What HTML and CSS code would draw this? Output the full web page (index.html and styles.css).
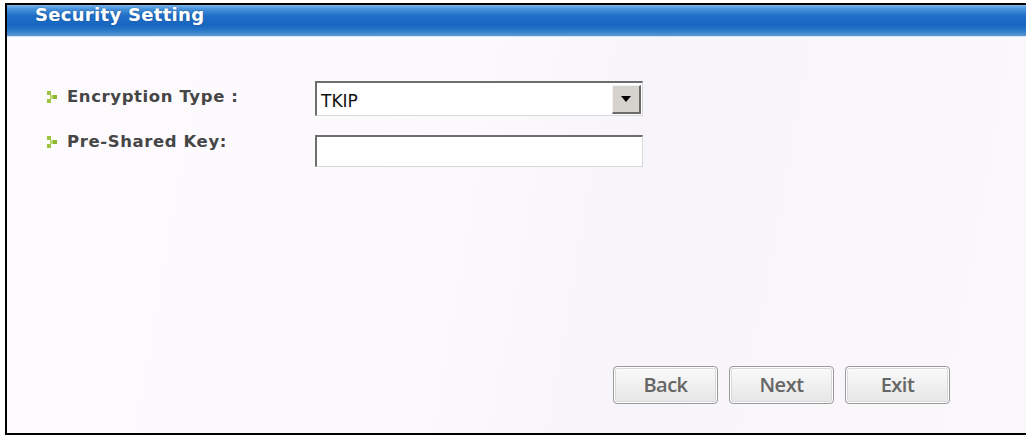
FILE: index.html
```html
<!DOCTYPE html>
<html>
<head>
<meta charset="utf-8">
<link rel="stylesheet" href="styles.css">
</head>
<body>
<div class="frame">
  <div class="header"><span class="title">Security Setting</span></div>
  <div class="content">
    <div class="form">
      <div class="label label-center">
        <svg class="bullet" width="10" height="12" viewBox="0 0 10 12"><rect x="0" y="0" width="4" height="4" fill="#9cc43c"/><rect x="3" y="4" width="3.5" height="4" fill="#b9d874"/><rect x="6" y="4" width="4" height="4" fill="#8cb830"/><rect x="0" y="8" width="4" height="4" fill="#9cc43c"/></svg>
        <span>Encryption Type :</span>
      </div>
      <div class="select">
        <span class="select-value">TKIP</span>
        <span class="select-btn"><svg width="10" height="6" viewBox="0 0 10 6"><path d="M0 0 H10 L5 6 Z" fill="#000"/></svg></span>
      </div>
      <div class="label label-top">
        <svg class="bullet" width="10" height="12" viewBox="0 0 10 12"><rect x="0" y="0" width="4" height="4" fill="#9cc43c"/><rect x="3" y="4" width="3.5" height="4" fill="#b9d874"/><rect x="6" y="4" width="4" height="4" fill="#8cb830"/><rect x="0" y="8" width="4" height="4" fill="#9cc43c"/></svg>
        <span>Pre-Shared Key:</span>
      </div>
      <div class="input"></div>
    </div>
    <div class="buttons">
      <button class="btn">Back</button>
      <button class="btn">Next</button>
      <button class="btn">Exit</button>
    </div>
  </div>
</div>
</body>
</html>
```
FILE: styles.css
```css
html, body {
  margin: 0;
  padding: 0;
  background: #ffffff;
}
body {
  width: 1026px;
  height: 437px;
  overflow: hidden;
}
.frame {
  margin: 3px 0 0 5px;
  height: 428px;
  border-top: 2px solid #000;
  border-left: 2px solid #000;
  border-bottom: 2px solid #000;
  display: flex;
  flex-direction: column;
  background: linear-gradient(100deg, #fdfbfe 0%, #fcf9fd 45%, #f8f5fa 60%, #fbf8fc 100%);
}
.header {
  height: 31px;
  border-bottom: 1px solid #d3e4f4;
  background: linear-gradient(to bottom, #7ab6ea 0%, #4a94dc 12%, #1f6fc8 35%, #1766c0 65%, #2a78c8 82%, #5c9bd4 100%);
  padding-left: 28px;
  display: flex;
  align-items: flex-start;
  overflow: hidden;
}
.title {
  font-family: "DejaVu Sans", Verdana, sans-serif;
  font-weight: bold;
  font-size: 18px;
  letter-spacing: 0.3px;
  color: #ffffff;
  line-height: 20px;
  text-shadow: 0 0 2px rgba(40, 70, 110, 0.6);
}
.content {
  flex: 1;
  display: flex;
  flex-direction: column;
  padding: 44px 76px 29px 40px;
}
.form {
  display: grid;
  grid-template-columns: 268px 328px;
  grid-template-rows: 35px 32px;
  row-gap: 19px;
}
.label {
  display: flex;
  gap: 10px;
  font-family: "DejaVu Sans", Tahoma, sans-serif;
  font-weight: bold;
  font-size: 16.5px;
  letter-spacing: 0.6px;
  color: #464646;
}
.label-center {
  align-items: center;
  padding-bottom: 4px;
}
.label-top {
  align-items: center;
  padding-bottom: 20px;
}
.bullet {
  flex: none;
  margin-top: 1px;
}
.select {
  box-sizing: border-box;
  border-top: 2px solid #6e6e6e;
  border-left: 2px solid #6e6e6e;
  border-right: 1px solid #d8d8d8;
  border-bottom: 1px solid #d8d8d8;
  background: #fff;
  display: flex;
  align-items: center;
  padding: 1px 1px 1px 4px;
}
.select-value {
  flex: 1;
  font-family: "DejaVu Sans", Tahoma, sans-serif;
  font-size: 17px;
  color: #111;
  padding-top: 3px;
}
.select-btn {
  box-sizing: border-box;
  width: 29px;
  height: 29px;
  background: #d6d3ce;
  border-top: 1px solid #f4f4f4;
  border-left: 1px solid #f4f4f4;
  border-right: 2px solid #6a6a6a;
  border-bottom: 2px solid #6a6a6a;
  display: flex;
  align-items: center;
  justify-content: center;
}
.input {
  box-sizing: border-box;
  border-top: 2px solid #6e6e6e;
  border-left: 2px solid #6e6e6e;
  border-right: 1px solid #d8d8d8;
  border-bottom: 1px solid #d8d8d8;
  background: #fff;
}
.buttons {
  margin-top: auto;
  display: flex;
  justify-content: flex-end;
  gap: 11px;
}
.btn {
  box-sizing: border-box;
  width: 105px;
  height: 38px;
  border: 1px solid #9a9a9a;
  border-radius: 4px;
  box-shadow: inset 0 0 0 1px #ffffff, inset 0 0 0 2px #d9d9d9;
  background: linear-gradient(to bottom, #fbfbfb 0%, #f0f0f0 50%, #e6e6e6 100%);
  font-family: "Open Sans", sans-serif;
  font-weight: 600;
  font-size: 20px;
  letter-spacing: -0.5px;
  color: #666666;
  padding: 0;
  line-height: 36px;
}
```
